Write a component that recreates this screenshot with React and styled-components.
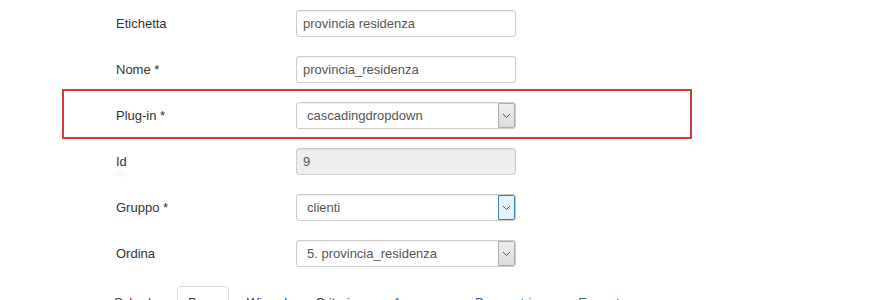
import React from "react";
import styled, { createGlobalStyle } from "styled-components";

const GlobalStyle = createGlobalStyle`
	html, body {
		margin: 0;
		padding: 0;
		background: #ffffff;
	}
	body {
		font-family: "Liberation Sans", Arial, sans-serif;
		font-size: 13px;
		color: #333333;
	}
`;

const Form = styled.div`
	display: flex;
	flex-direction: column;
	width: 630px;
	margin-left: 62px;
	height: 300px;
	overflow: hidden;
`;

const Row = styled.div`
	display: flex;
	flex-direction: row;
	flex-shrink: 0;
	align-items: flex-start;
	box-sizing: border-box;
	height: 46px;
	padding: 10px 0 0 54px;
`;

const HighlightRow = styled(Row)`
	height: 50px;
	margin: -3px 0 -1px;
	padding: 11px 0 0 52px;
	border: 2px solid #d33b3b;
`;

const Label = styled.div`
	width: 180px;
	line-height: 27px;
	color: #333333;
`;

const Field = styled.div`
	display: flex;
	align-items: center;
	box-sizing: border-box;
	width: 220px;
	height: 27px;
	padding-left: ${({ $select }) => ($select ? "10px" : "6px")};
	border: 1px solid #cccccc;
	border-radius: 3px;
	background-color: ${({ $disabled }) => ($disabled ? "#eeeeee" : "#ffffff")};
	box-shadow: inset 0 1px 1px rgba(0, 0, 0, 0.06);
	color: #555555;
	overflow: hidden;
`;

const Value = styled.span`
	flex: 1;
	white-space: nowrap;
`;

const Arrow = styled.div`
	display: flex;
	align-items: center;
	justify-content: center;
	box-sizing: border-box;
	width: 17px;
	height: 25px;
	border: 1px solid ${({ $focus }) => ($focus ? "#3d7bc4" : "#acacac")};
	border-radius: 0 2px 2px 0;
	background: ${({ $focus }) =>
		$focus ? "#e5f1fb" : "linear-gradient(#eeeeee, #dddddd)"};
`;

const Tabs = styled.div`
	display: flex;
	flex-direction: row;
	flex-shrink: 0;
	align-items: flex-start;
	margin-top: 10px;
	padding-left: 41px;
`;

const Tab = styled.div`
	padding: 8px 10px 8px;
	margin-right: ${({ $gap }) => $gap}px;
	border: 1px solid ${({ $active }) => ($active ? "#dddddd" : "transparent")};
	border-bottom: none;
	border-radius: 4px 4px 0 0;
	color: ${({ $link }) => ($link ? "#2a6496" : "#333333")};
	white-space: nowrap;
`;

const Chevron = () => (
	<svg width="9" height="6" viewBox="0 0 9 6">
		<path d="M1 1l3.5 3.5L8 1" fill="none" stroke="#555" strokeWidth="1" />
	</svg>
);

const TextField = ({ value, disabled }) => (
	<Field $disabled={disabled}>
		<Value>{value}</Value>
	</Field>
);

const SelectField = ({ value, focus }) => (
	<Field $select>
		<Value>{value}</Value>
		<Arrow $focus={focus}>
			<Chevron />
		</Arrow>
	</Field>
);

const App = () => {
	return (
		<>
			<GlobalStyle />
			<Form>
				<Row>
					<Label>Etichetta</Label>
					<TextField value="provincia residenza" />
				</Row>
				<Row>
					<Label>Nome *</Label>
					<TextField value="provincia_residenza" />
				</Row>
				<HighlightRow>
					<Label>Plug-in *</Label>
					<SelectField value="cascadingdropdown" />
				</HighlightRow>
				<Row>
					<Label>Id</Label>
					<TextField value="9" disabled />
				</Row>
				<Row>
					<Label>Gruppo *</Label>
					<SelectField value="clienti" focus />
				</Row>
				<Row>
					<Label>Ordina</Label>
					<SelectField value="5. provincia_residenza" />
				</Row>
				<Tabs>
					<Tab $gap={8}>Scheda</Tab>
					<Tab $active $gap={7}>Base</Tab>
					<Tab $gap={6}>Wizard</Tab>
					<Tab $gap={21}>Criteri</Tab>
					<Tab $link $gap={11}>Accesso</Tab>
					<Tab $link $gap={25}>Parametri</Tab>
					<Tab $link $gap={0}>Formato</Tab>
				</Tabs>
			</Form>
		</>
	);
};

export default App;
